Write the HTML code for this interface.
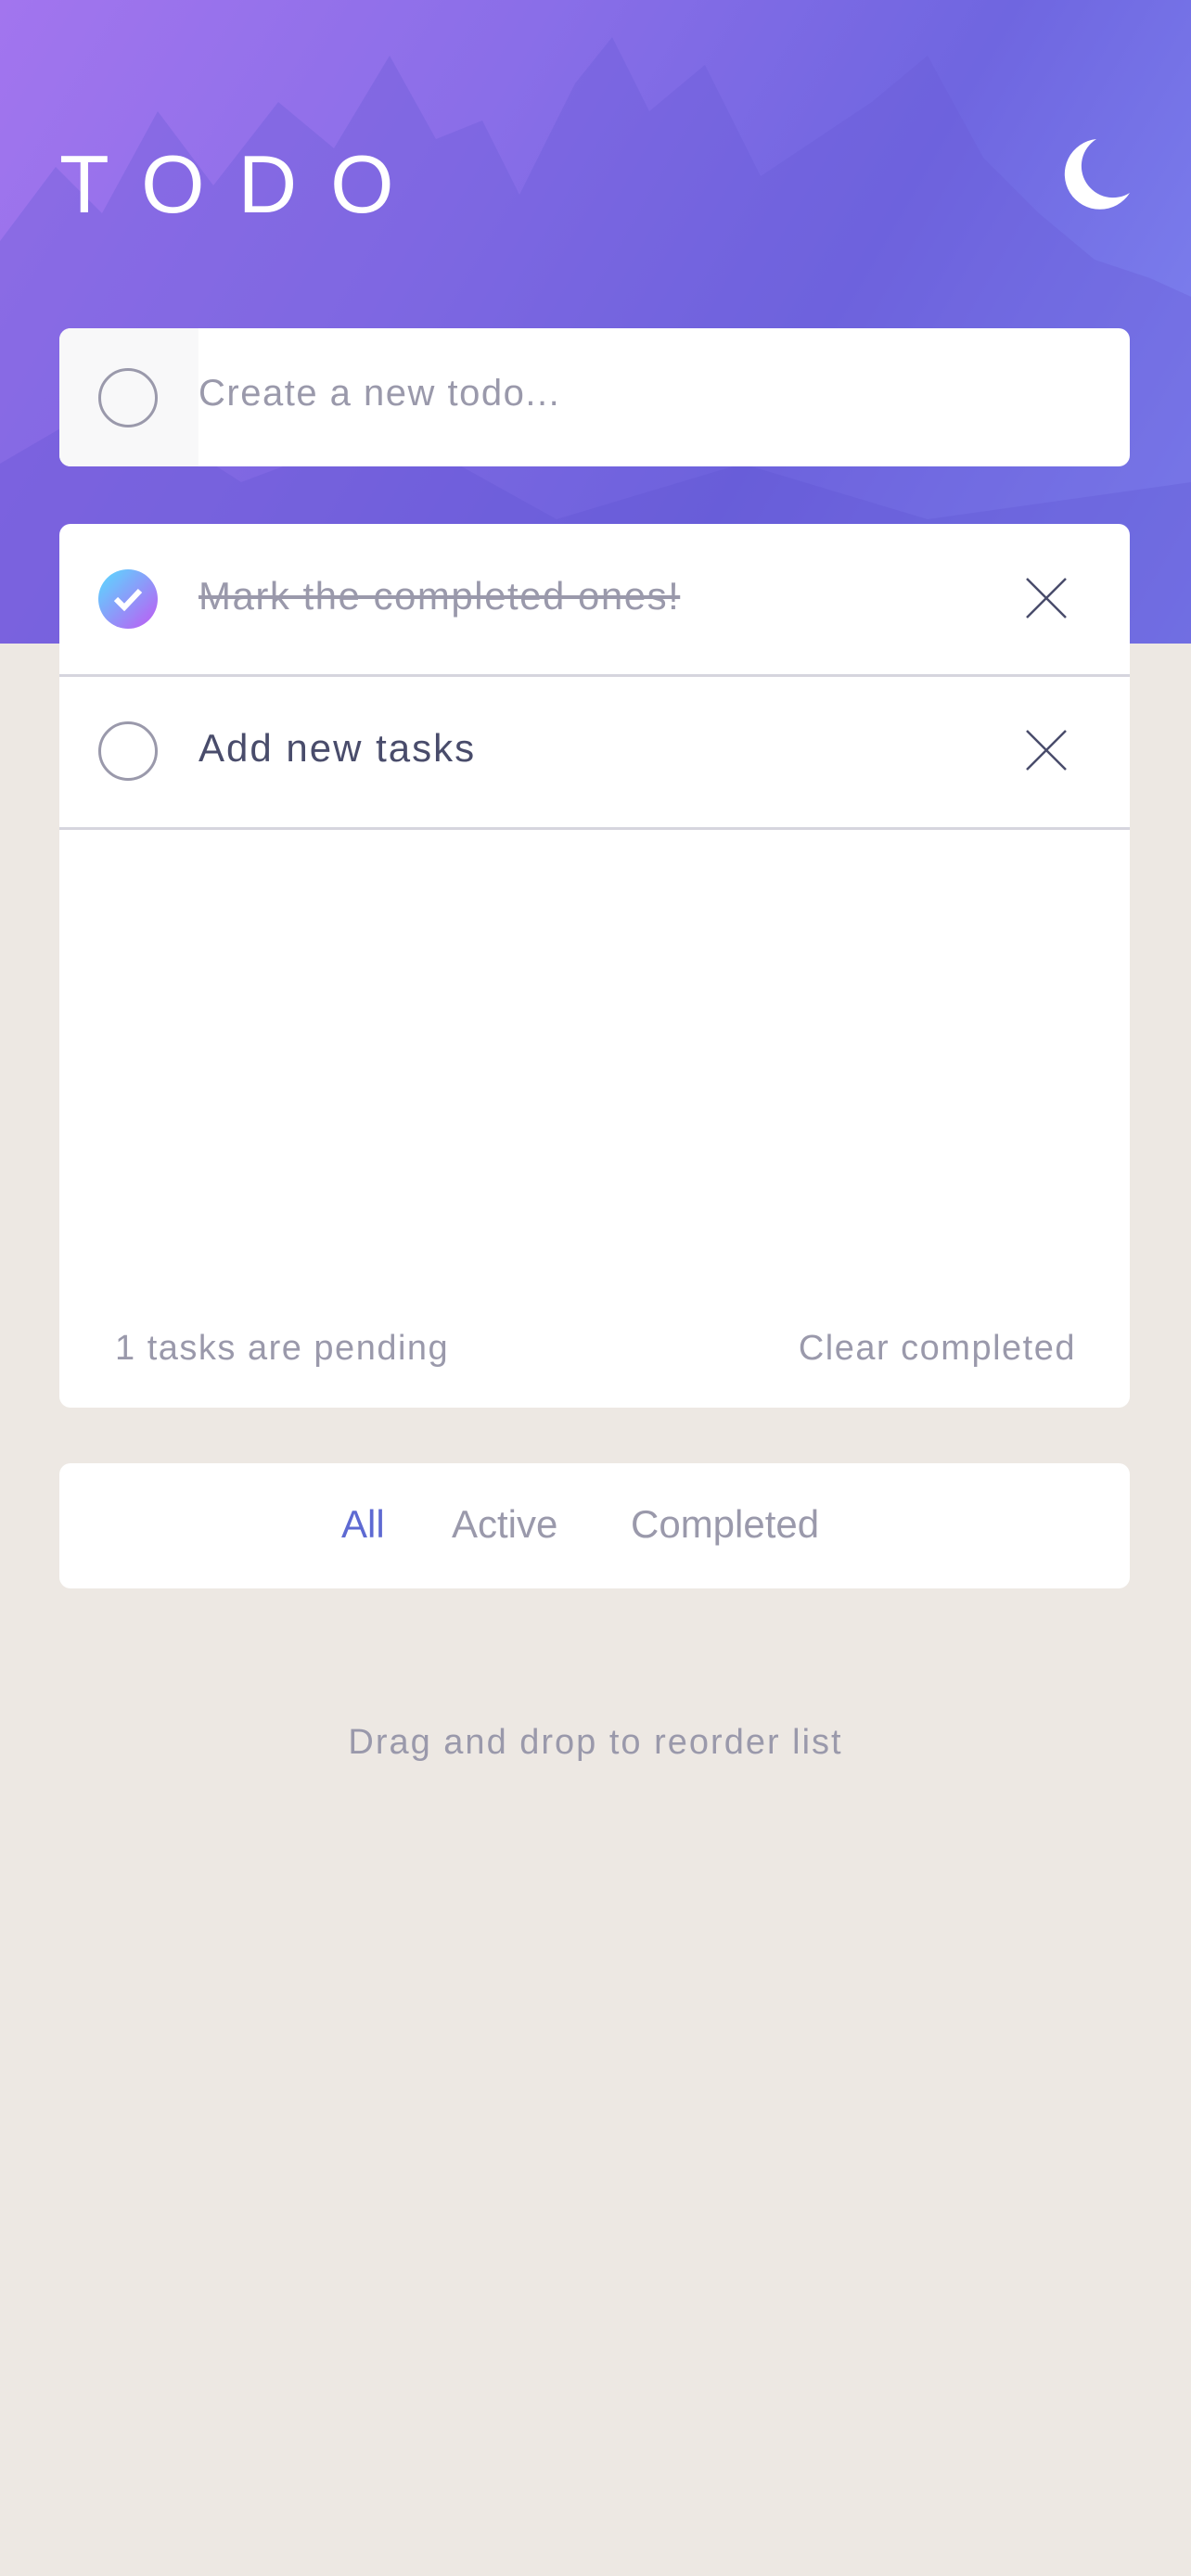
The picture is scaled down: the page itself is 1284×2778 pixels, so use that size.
<!DOCTYPE html>
<html><head><meta charset="utf-8"><style>
*{margin:0;padding:0;box-sizing:border-box}
body{width:1284px;height:2778px;background:#ede8e3;font-family:"Liberation Sans",sans-serif;position:relative;overflow:hidden}
.hdr{position:absolute;left:0;top:0;width:1284px;height:694px;background:linear-gradient(120deg,#a275ee 0%,#8a6ee8 35%,#6f66e0 65%,#8088f2 100%);overflow:hidden}
.card{position:absolute;left:64px;width:1154px;background:#fff;border-radius:12px}
.t{position:absolute;white-space:nowrap}
.circ{position:absolute;left:42px;width:64px;height:64px;border-radius:50%;border:3px solid #9a99ab}
</style></head><body>
<div class="hdr">
<svg width="1284" height="694" style="position:absolute;left:0;top:0">
<path d="M0 260 L60 180 L110 230 L170 120 L230 200 L300 110 L360 160 L420 60 L470 150 L520 130 L560 210 L620 90 L660 40 L700 120 L760 70 L820 190 L880 150 L940 110 L1000 60 L1060 170 L1120 230 L1180 280 L1240 300 L1284 320 L1284 694 L0 694 Z" fill="#6a5bd8" opacity="0.35"/>
<path d="M0 500 L120 430 L260 520 L420 460 L600 560 L800 500 L1000 560 L1284 520 L1284 694 L0 694Z" fill="#5d4fd0" opacity="0.25"/>
</svg>
<div class="t" style="left:64px;top:148px;font-size:88px;color:#fff;letter-spacing:36px;font-weight:400">TODO</div>
<svg style="position:absolute;left:1142px;top:148px" width="80" height="80" viewBox="0 0 80 80"><path d="M40 2 A38 38 0 1 0 76 60 A34 34 0 0 1 40 2Z" fill="#fff"/></svg>
</div>
<div class="card" style="top:354px;height:149px">
<div style="position:absolute;left:0;top:0;width:150px;height:149px;background:#f8f8f9;border-radius:12px 0 0 12px"></div>
<div class="circ" style="top:43px"></div>
<div class="t" style="left:150px;top:48px;font-size:40px;letter-spacing:1.5px;color:#9a99ab">Create a new todo...</div>
</div>
<div class="card" style="top:565px;height:953px">
<div class="circ" style="top:49px;border:none;background:linear-gradient(135deg,#57ddff,#c058f3)"></div>
<svg style="position:absolute;left:56px;top:66px" width="36" height="30"><path d="M5 15 L14 24 L31 6" stroke="#fff" stroke-width="6" fill="none"/></svg>
<div class="t" style="left:150px;top:54px;font-size:42px;letter-spacing:1.5px;color:#9a99ab;text-decoration:line-through">Mark the completed ones!</div>
<svg style="position:absolute;left:1041px;top:57px" width="46" height="46"><path d="M2 2L44 44M44 2L2 44" stroke="#494c6b" stroke-width="2.5"/></svg>
<div style="position:absolute;left:0;top:162px;width:100%;height:3px;background:#d6d5de"></div>
<div class="circ" style="top:213px"></div>
<div class="t" style="left:150px;top:218px;font-size:42px;letter-spacing:2px;color:#494c6b">Add new tasks</div>
<svg style="position:absolute;left:1041px;top:221px" width="46" height="46"><path d="M2 2L44 44M44 2L2 44" stroke="#494c6b" stroke-width="2.5"/></svg>
<div style="position:absolute;left:0;top:327px;width:100%;height:3px;background:#d6d5de"></div>
<div class="t" style="left:60px;top:868px;font-size:38px;letter-spacing:1.5px;color:#9a99ab">1 tasks are pending</div>
<div class="t" style="right:58px;top:868px;font-size:38px;letter-spacing:1.5px;color:#9a99ab">Clear completed</div>
</div>
<div class="card" style="top:1578px;height:135px">
<div class="t" style="left:304px;top:42px;font-size:42px;color:#5e6ad2">All</div>
<div class="t" style="left:423px;top:42px;font-size:42px;color:#9a99ab">Active</div>
<div class="t" style="left:616px;top:42px;font-size:42px;color:#9a99ab">Completed</div>
</div>
<div class="t" style="left:0;width:1284px;text-align:center;top:1858px;font-size:38px;letter-spacing:2px;color:#9a99ab">Drag and drop to reorder list</div>
</body></html>
